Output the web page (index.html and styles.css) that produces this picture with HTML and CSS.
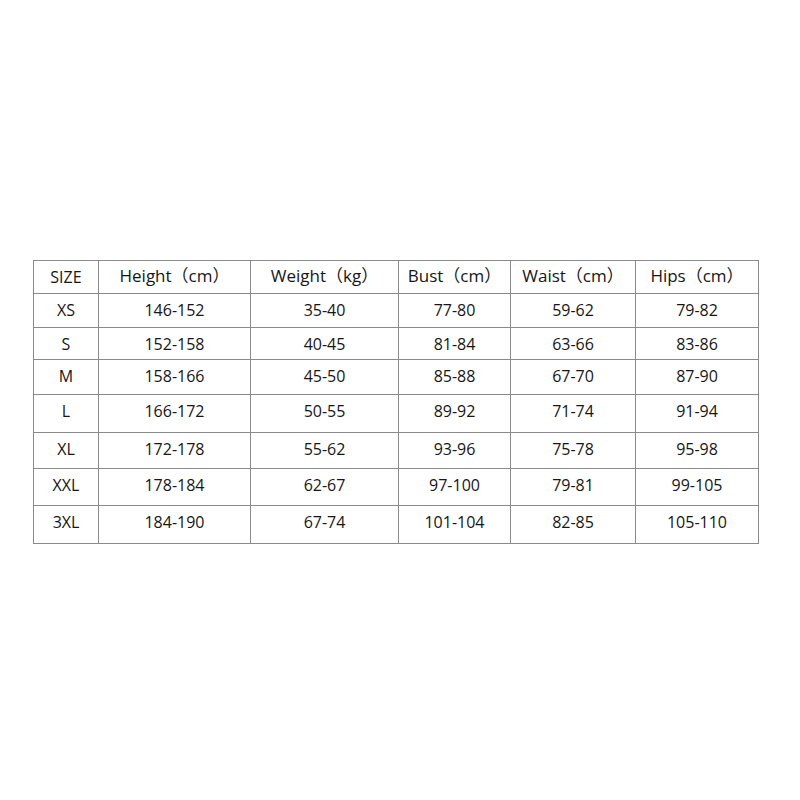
FILE: index.html
```html
<!DOCTYPE html>
<html>
<head>
<meta charset="utf-8">
<link rel="stylesheet" href="styles.css">
</head>
<body>
<table class="size-table">
  <colgroup>
    <col class="c-size"><col class="c-h"><col class="c-w"><col class="c-b"><col class="c-wa"><col class="c-hi">
  </colgroup>
  <tr class="r-head"><td>SIZE</td><td class="head">Height（cm）</td><td class="head">Weight（kg）</td><td class="head">Bust（cm）</td><td class="head">Waist（cm）</td><td class="head">Hips（cm）</td></tr>
  <tr class="r1"><td>XS</td><td>146-152</td><td>35-40</td><td>77-80</td><td>59-62</td><td>79-82</td></tr>
  <tr class="r2"><td>S</td><td>152-158</td><td>40-45</td><td>81-84</td><td>63-66</td><td>83-86</td></tr>
  <tr class="r3"><td>M</td><td>158-166</td><td>45-50</td><td>85-88</td><td>67-70</td><td>87-90</td></tr>
  <tr class="r4"><td>L</td><td>166-172</td><td>50-55</td><td>89-92</td><td>71-74</td><td>91-94</td></tr>
  <tr class="r5"><td>XL</td><td>172-178</td><td>55-62</td><td>93-96</td><td>75-78</td><td>95-98</td></tr>
  <tr class="r6"><td>XXL</td><td>178-184</td><td>62-67</td><td>97-100</td><td>79-81</td><td>99-105</td></tr>
  <tr class="r7"><td>3XL</td><td>184-190</td><td>67-74</td><td>101-104</td><td>82-85</td><td>105-110</td></tr>
</table>
</body>
</html>
```
FILE: styles.css
```css
html, body {
  margin: 0;
  padding: 0;
  background: #fff;
}
body {
  font-family: "Open Sans", "Noto Sans CJK SC", sans-serif;
  color: #161616;
}
.size-table {
  margin-top: 260px;
  margin-left: 33px;
  border-collapse: collapse;
  table-layout: fixed;
  width: 726px;
  font-size: 16px;
}
.size-table td {
  border: 1px solid #8a8a8a;
  text-align: center;
  vertical-align: top;
  padding: 5px 0 0 0;
  line-height: 22px;
  white-space: nowrap;
}
.size-table td.head {
  font-size: 17px;
  padding-top: 4px;
}
.c-size { width: 65px; }
.c-h { width: 152px; }
.c-w { width: 148px; }
.c-b { width: 112px; }
.c-wa { width: 125px; }
.c-hi { width: 123px; }
.r-head { height: 33px; }
.r1 { height: 34px; }
.r2 { height: 32px; }
.r3 { height: 35px; }
.r4 { height: 38px; }
.r5 { height: 36px; }
.r6 { height: 37px; }
.r7 { height: 38px; }
```
